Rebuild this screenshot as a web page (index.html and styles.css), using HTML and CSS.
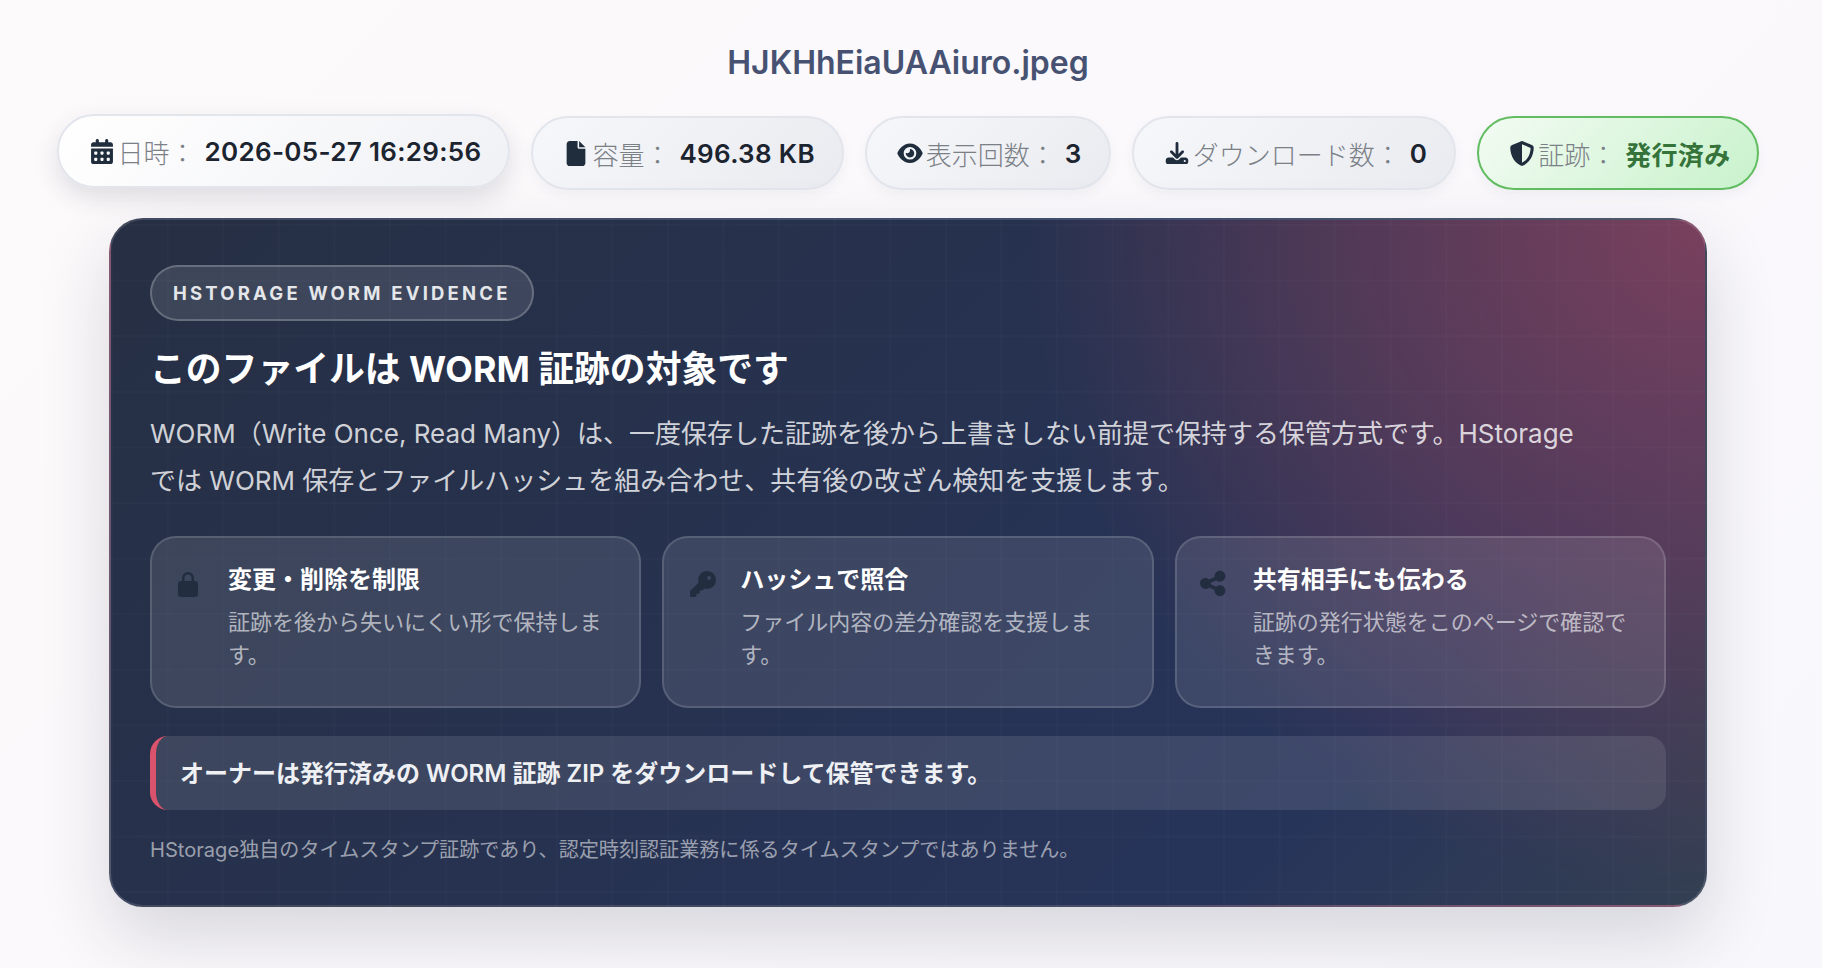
FILE: index.html
```html
<!DOCTYPE html>
<html lang="ja">
<head>
<meta charset="utf-8">
<title>HJKHhEiaUAAiuro.jpeg</title>
<link rel="stylesheet" href="styles.css">
</head>
<body>
<main class="page">
  <h1 class="file-name">HJKHhEiaUAAiuro.jpeg</h1>
  <div class="chips">
    <div class="chip chip-lifted">
      <svg class="chip-icon" viewBox="0 0 448 512"><path d="M128 0c17.7 0 32 14.3 32 32V64H288V32c0-17.7 14.3-32 32-32s32 14.3 32 32V64h48c26.5 0 48 21.5 48 48v48H0V112C0 85.5 21.5 64 48 64H96V32c0-17.7 14.3-32 32-32zM0 192H448V464c0 26.5-21.5 48-48 48H48c-26.5 0-48-21.5-48-48V192zm64 80v32c0 8.8 7.2 16 16 16h32c8.8 0 16-7.2 16-16V272c0-8.8-7.2-16-16-16H80c-8.8 0-16 7.2-16 16zm128 0v32c0 8.8 7.2 16 16 16h32c8.8 0 16-7.2 16-16V272c0-8.8-7.2-16-16-16H208c-8.8 0-16 7.2-16 16zm144-16c-8.8 0-16 7.2-16 16v32c0 8.8 7.2 16 16 16h32c8.8 0 16-7.2 16-16V272c0-8.8-7.2-16-16-16H336zM64 400v32c0 8.8 7.2 16 16 16h32c8.8 0 16-7.2 16-16V400c0-8.8-7.2-16-16-16H80c-8.8 0-16 7.2-16 16zm144-16c-8.8 0-16 7.2-16 16v32c0 8.8 7.2 16 16 16h32c8.8 0 16-7.2 16-16V400c0-8.8-7.2-16-16-16H208zm112 16v32c0 8.8 7.2 16 16 16h32c8.8 0 16-7.2 16-16V400c0-8.8-7.2-16-16-16H336c-8.8 0-16 7.2-16 16z"/></svg>
      <span class="chip-label">日時：</span><span class="chip-value">2026-05-27 16:29:56</span>
    </div>
    <div class="chip">
      <svg class="chip-icon" viewBox="0 0 384 512"><path d="M0 64C0 28.7 28.7 0 64 0H224V128c0 17.7 14.3 32 32 32H384V448c0 35.3-28.7 64-64 64H64c-35.3 0-64-28.7-64-64V64zm384 64H256V0L384 128z"/></svg>
      <span class="chip-label">容量：</span><span class="chip-value">496.38 KB</span>
    </div>
    <div class="chip">
      <svg class="chip-icon chip-icon-small" viewBox="0 0 576 512"><path d="M288 32c-80.8 0-145.5 36.8-192.6 80.6C48.6 156 17.3 208 2.5 243.7c-3.3 7.9-3.3 16.7 0 24.6C17.3 304 48.6 356 95.4 399.4C142.5 443.2 207.2 480 288 480s145.5-36.8 192.6-80.6c46.8-43.5 78.1-95.4 93-131.1c3.3-7.9 3.3-16.7 0-24.6c-14.9-35.7-46.2-87.7-93-131.1C433.5 68.8 368.8 32 288 32zM144 256a144 144 0 1 1 288 0 144 144 0 1 1 -288 0zm144-64c0 35.3-28.7 64-64 64c-7.1 0-13.9-1.2-20.3-3.3c-5.5-1.8-11.9 1.6-11.7 7.4c.3 6.9 1.3 13.8 3.2 20.7c13.7 51.2 66.4 81.6 117.6 67.9s81.6-66.4 67.9-117.6c-11.1-41.5-47.8-69.4-88.6-71.1c-5.8-.2-9.2 6.1-7.4 11.7c2.1 6.4 3.3 13.2 3.3 20.3z"/></svg>
      <span class="chip-label">表示回数：</span><span class="chip-value">3</span>
    </div>
    <div class="chip">
      <svg class="chip-icon chip-icon-small" viewBox="0 0 512 512"><path d="M288 32c0-17.7-14.3-32-32-32s-32 14.3-32 32V274.7l-73.4-73.4c-12.5-12.5-32.8-12.5-45.3 0s-12.5 32.8 0 45.3l128 128c12.5 12.5 32.8 12.5 45.3 0l128-128c12.5-12.5 12.5-32.8 0-45.3s-32.8-12.5-45.3 0L288 274.7V32zM64 352c-35.3 0-64 28.7-64 64v32c0 35.3 28.7 64 64 64H448c35.3 0 64-28.7 64-64V416c0-35.3-28.7-64-64-64H346.5l-45.3 45.3c-25 25-65.5 25-90.5 0L165.5 352H64zm368 56a24 24 0 1 1 0 48 24 24 0 1 1 0-48z"/></svg>
      <span class="chip-label">ダウンロード数：</span><span class="chip-value">0</span>
    </div>
    <div class="chip chip-ok">
      <svg class="chip-icon" viewBox="0 0 512 512"><path d="M256 0c4.6 0 9.2 1 13.4 2.9L457.7 82.8c22 9.3 38.4 31 38.3 57.2c-.5 99.2-41.3 280.7-213.6 363.2c-16.7 8-36.1 8-52.8 0C57.3 420.7 16.5 239.2 16 140c-.1-26.2 16.3-47.9 38.3-57.2L242.7 2.9C246.8 1 251.4 0 256 0zm0 66.8V444.8C394 378 431.1 230.1 432 141.4L256 66.8l0 0z"/></svg>
      <span class="chip-label">証跡：</span><span class="chip-value">発行済み</span>
    </div>
  </div>

  <section class="evidence">
    <div class="eyebrow">HSTORAGE WORM EVIDENCE</div>
    <h2 class="evidence-title">このファイルは WORM 証跡の対象です</h2>
    <p class="evidence-text">WORM（Write Once, Read Many）は、一度保存した証跡を後から上書きしない前提で保持する保管方式です。HStorage では WORM 保存とファイルハッシュを組み合わせ、共有後の改ざん検知を支援します。</p>
    <div class="features">
      <article class="feature">
        <svg class="feature-icon feature-icon-lock" viewBox="0 0 20 26"><path fill-rule="evenodd" d="M4 10V7a6 6 0 0 1 12 0v3h1a3 3 0 0 1 3 3v10a3 3 0 0 1-3 3H3a3 3 0 0 1-3-3V13a3 3 0 0 1 3-3zM6.5 10h7V7a3.5 3.5 0 0 0-7 0z"/></svg>
        <div>
          <h3 class="feature-title">変更・削除を制限</h3>
          <p class="feature-text">証跡を後から失いにくい形で保持します。</p>
        </div>
      </article>
      <article class="feature">
        <svg class="feature-icon" viewBox="0 0 512 512"><path d="M336 352c97.2 0 176-78.8 176-176S433.2 0 336 0S160 78.8 160 176c0 18.7 2.9 36.8 8.3 53.7L7 391c-4.5 4.5-7 10.6-7 17v80c0 13.3 10.7 24 24 24h80c13.3 0 24-10.7 24-24V448h40c13.3 0 24-10.7 24-24V384h40c6.4 0 12.5-2.5 17-7l33.3-33.3c16.9 5.4 35 8.3 53.7 8.3zM376 96a40 40 0 1 1 0 80 40 40 0 1 1 0-80z"/></svg>
        <div>
          <h3 class="feature-title">ハッシュで照合</h3>
          <p class="feature-text">ファイル内容の差分確認を支援します。</p>
        </div>
      </article>
      <article class="feature">
        <svg class="feature-icon feature-icon-share" viewBox="0 0 448 512"><path d="M352 224c53 0 96-43 96-96s-43-96-96-96s-96 43-96 96c0 4 .2 8 .7 11.9l-94.1 47C145.4 170.2 121.9 160 96 160c-53 0-96 43-96 96s43 96 96 96c25.9 0 49.4-10.2 66.6-26.9l94.1 47c-.5 3.9-.7 7.8-.7 11.9c0 53 43 96 96 96s96-43 96-96s-43-96-96-96c-25.9 0-49.4 10.2-66.6 26.9l-94.1-47c.5-3.9 .7-7.8 .7-11.9s-.2-8-.7-11.9l94.1-47C302.6 213.8 326.1 224 352 224z"/></svg>
        <div>
          <h3 class="feature-title">共有相手にも伝わる</h3>
          <p class="feature-text">証跡の発行状態をこのページで確認できます。</p>
        </div>
      </article>
    </div>
    <div class="owner-note">オーナーは発行済みの WORM 証跡 ZIP をダウンロードして保管できます。</div>
    <p class="disclaimer">HStorage独自のタイムスタンプ証跡であり、認定時刻認証業務に係るタイムスタンプではありません。</p>
  </section>
</main>
</body>
</html>
```
FILE: styles.css
```css
* { box-sizing: border-box; }
html, body { margin: 0; height: 100%; overflow: hidden; }
body {
  background: linear-gradient(135deg, #fdfafb 0%, #f8f7fb 100%);
  font-family: "Inter", "Noto Sans CJK JP", sans-serif;
  color: #1f2937;
}
.page {
  width: 1816px;
  display: flex;
  flex-direction: column;
  align-items: center;
  padding-top: 42px;
}
.file-name {
  margin: 0;
  font-size: 32px;
  line-height: 42px;
  font-weight: 600;
  color: #475272;
}
.chips {
  display: flex;
  gap: 21px;
  margin-top: 32px;
}
.chip {
  display: flex;
  align-items: center;
  height: 74px;
  padding: 0 27px 0 29px;
  border: 2px solid #e2e5ec;
  border-radius: 37px;
  background: linear-gradient(135deg, #f6f7fa 0%, #e9ebf0 100%);
  box-shadow: 0 5px 12px rgba(40, 50, 70, .05);
  font-size: 26px;
}
.chip-lifted {
  transform: translateY(-2px);
  background: linear-gradient(135deg, #ffffff 0%, #f0f1f5 100%);
  box-shadow: 0 10px 24px rgba(40, 50, 70, .14);
}
.chip-ok {
  border-color: #62bd62;
  background: linear-gradient(135deg, #f3fbf3 0%, #c8f2cb 100%);
}
.chip-icon {
  height: 25px;
  width: 28px;
  fill: #1f2d3d;
  flex: none;
  margin-right: 2px;
}
.chip-icon-small { height: 22.5px; }
.chip-label {
  color: #7b8087;
  font-weight: 300;
  margin-right: 9px;
}
.chip-value {
  font-weight: 600;
  color: #1c2430;
  letter-spacing: .012em;
}
.chip-ok .chip-value { color: #35733a; }

.evidence {
  width: 1598px;
  height: 689px;
  margin-top: 28px;
  padding: 45px 39px 0;
  border: 2px solid rgba(255, 255, 255, .13);
  border-radius: 34px;
  color: #fff;
  background-color: #27324c;
  background-image:
    linear-gradient(rgba(255, 255, 255, .016) 2px, transparent 2px),
    linear-gradient(90deg, rgba(255, 255, 255, .016) 2px, transparent 2px),
    radial-gradient(circle at 100% 0%, rgba(222, 80, 100, .45) 0%, rgba(222, 80, 100, .24) 20%, rgba(222, 80, 100, 0) 39%),
    linear-gradient(135deg, #262f43 0%, #27345a 78%, #333f52 100%);
  background-size: 55.6px 55.6px, 55.6px 55.6px, 100% 100%, 100% 100%;
  background-position: 0 4px, 0 0, 0 0, 0 0;
  box-shadow: 0 30px 70px rgba(30, 35, 60, .16);
}
.eyebrow {
  display: inline-flex;
  align-items: center;
  height: 56px;
  padding: 0 21px;
  border: 2px solid rgba(255, 255, 255, .22);
  border-radius: 28px;
  background: rgba(255, 255, 255, .11);
  font-size: 18.5px;
  font-weight: 700;
  letter-spacing: 3.2px;
  color: #e4e6ea;
}
.evidence-title {
  margin: 23px 0 0;
  font-size: 35.8px;
  line-height: 50px;
  font-weight: 700;
}
.evidence-text {
  margin: 17px 0 0;
  font-size: 26px;
  line-height: 46.8px;
  color: rgba(255, 255, 255, .8);
  max-width: 1440px;
}
.features {
  display: grid;
  grid-template-columns: repeat(3, 1fr);
  gap: 21px;
  margin-top: 31px;
}
.feature {
  display: flex;
  padding: 25px 26px 33.5px 25.5px;
  border: 2px solid rgba(255, 255, 255, .14);
  border-radius: 26px;
  background: rgba(255, 255, 255, .1);
}
.feature-icon {
  height: 26px;
  width: 26px;
  margin: 8px 24.5px 0 0;
  fill: #222e40;
  flex: none;
}
.feature-icon-lock {
  width: 20px;
  margin-right: 30.5px;
}
.feature-icon-share {
  height: 29px;
  width: 25.4px;
  margin: 6.5px 27.1px 0 -2px;
}
.feature-title {
  margin: 0;
  font-size: 24px;
  line-height: 34px;
  font-weight: 700;
}
.feature-text {
  margin: 9px 0 0;
  font-size: 22px;
  line-height: 33.6px;
  color: rgba(255, 255, 255, .62);
}
.owner-note {
  display: flex;
  align-items: center;
  height: 74px;
  margin-top: 28px;
  padding: 0 0 3px 24px;
  border-left: 6px solid #d9536d;
  border-radius: 18px;
  background: rgba(255, 255, 255, .1);
  font-size: 24px;
  font-weight: 600;
  color: #eef0f3;
}
.disclaimer {
  margin: 25px 0 0;
  font-size: 20.1px;
  line-height: 30px;
  color: rgba(255, 255, 255, .55);
}
```
